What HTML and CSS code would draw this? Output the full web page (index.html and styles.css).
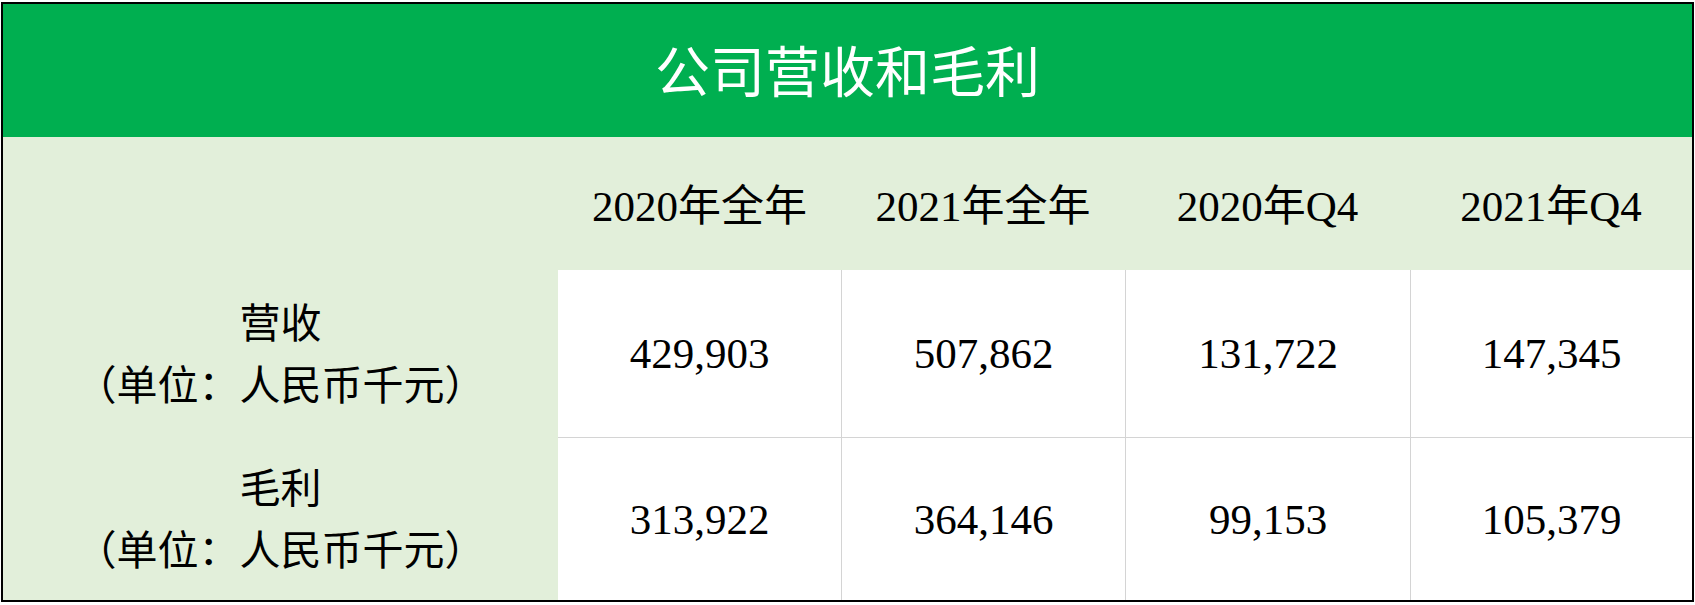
FILE: index.html
```html
<!DOCTYPE html>
<html lang="zh-CN">
<head>
<meta charset="utf-8">
<title>公司营收和毛利</title>
<link rel="stylesheet" href="styles.css">
</head>
<body>
<div class="sheet">
  <div class="table">
    <div class="title">公司营收和毛利</div>

    <div class="corner"></div>
    <div class="head">2020年全年</div>
    <div class="head">2021年全年</div>
    <div class="head">2020年Q4</div>
    <div class="head">2021年Q4</div>

    <div class="label">
      <span class="line">营收</span>
      <span class="line"><span class="po">（</span>单位<span class="pc">：</span>人民币千元<span class="pe">）</span></span>
    </div>
    <div class="num first">429,903</div>
    <div class="num">507,862</div>
    <div class="num">131,722</div>
    <div class="num">147,345</div>

    <div class="label">
      <span class="line">毛利</span>
      <span class="line"><span class="po">（</span>单位<span class="pc">：</span>人民币千元<span class="pe">）</span></span>
    </div>
    <div class="num first second">313,922</div>
    <div class="num second">364,146</div>
    <div class="num second">99,153</div>
    <div class="num second">105,379</div>
  </div>
</div>
</body>
</html>
```

FILE: styles.css
```css
html, body {
  margin: 0;
  padding: 0;
  background: #ffffff;
}

.sheet {
  padding: 2px 0 0 1px;
}

.table {
  box-sizing: border-box;
  width: 1693px;
  height: 600px;
  border: 2px solid #000000;
  background: #e2efda;
  display: grid;
  grid-template-columns: 555px 283px 284px 285px 282px;
  grid-template-rows: 133px 133px 167px 163px;
}

.title {
  grid-column: 1 / -1;
  background: #00af50;
  color: #ffffff;
  font-family: "Noto Sans CJK SC", "Noto Sans", sans-serif;
  font-size: 55px;
  line-height: 1;
  display: flex;
  align-items: center;
  justify-content: center;
  padding-bottom: 4px;
  box-sizing: border-box;
}

.head {
  font-family: "Liberation Serif", "Noto Sans CJK SC", serif;
  font-size: 43px;
  color: #000000;
  display: flex;
  align-items: center;
  justify-content: center;
  padding-bottom: 4px;
  box-sizing: border-box;
}

.label {
  font-family: "Noto Sans CJK SC", "Noto Sans", sans-serif;
  font-size: 41px;
  line-height: 62px;
  color: #000000;
  display: flex;
  flex-direction: column;
  align-items: center;
  justify-content: center;
  padding-bottom: 6px;
  box-sizing: border-box;
}

.line {
  display: block;
  white-space: nowrap;
}

.po,
.pc,
.pe {
  display: inline-block;
  width: 1em;
}

.po {
  text-align: right;
}

.pc {
  text-align: center;
}

.pe {
  text-align: left;
}

.num {
  background: #ffffff;
  font-family: "Liberation Serif", serif;
  font-size: 43px;
  color: #000000;
  display: flex;
  align-items: center;
  justify-content: center;
  border-left: 1px solid #d4d4d4;
  box-sizing: border-box;
}

.num.first {
  border-left: none;
}

.num.second {
  border-top: 1px solid #d4d4d4;
}
```
